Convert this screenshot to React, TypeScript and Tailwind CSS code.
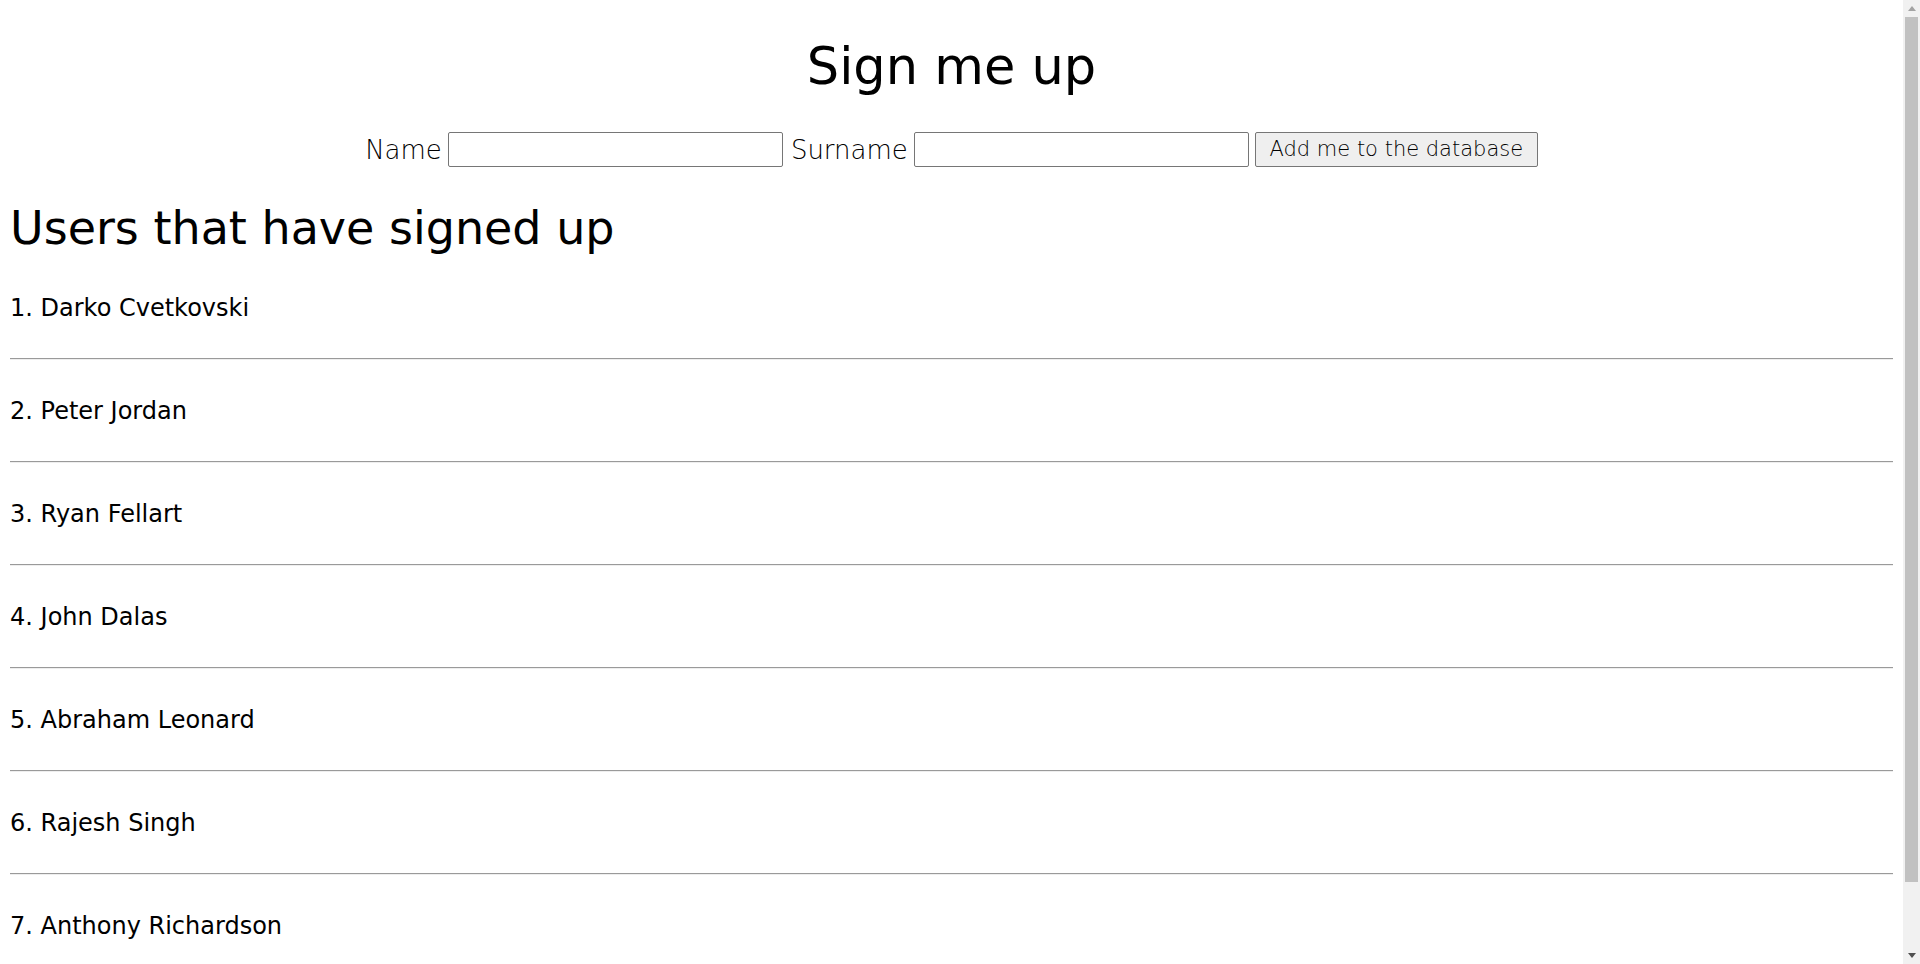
import React from "react";

const users = [
  "Darko Cvetkovski",
  "Peter Jordan",
  "Ryan Fellart",
  "John Dalas",
  "Abraham Leonard",
  "Rajesh Singh",
  "Anthony Richardson",
];

function FakeScrollbar() {
  return (
    <div className="flex h-full w-[17px] shrink-0 flex-col bg-[#f1f1f1]">
      <div className="flex h-[17px] items-center justify-center">
        <svg width="8" height="5" viewBox="0 0 8 5">
          <polygon points="4,0 8,5 0,5" fill="#a3a3a3" />
        </svg>
      </div>
      <div className="flex flex-1 flex-col px-[2px]">
        <div className="h-[865px] bg-[#c1c1c1]" />
      </div>
      <div className="flex h-[17px] items-center justify-center">
        <svg width="8" height="5" viewBox="0 0 8 5">
          <polygon points="0,0 8,0 4,5" fill="#505050" />
        </svg>
      </div>
    </div>
  );
}

export default function App() {
  return (
    <div
      className="flex h-screen w-full overflow-hidden bg-white text-black"
      style={{ fontFamily: '"DejaVu Sans", "Noto Sans", sans-serif' }}
    >
      <div className="min-w-0 flex-1 overflow-hidden px-[10px] pb-[59px]">
        <h1 className="pt-[41px] text-center text-[51px] leading-none font-normal">Sign me up</h1>
        <form
          className="mt-[40px] flex items-center justify-center gap-[6px]"
          onSubmit={(e) => e.preventDefault()}
        >
          <label className="text-[26px] leading-none font-light text-black">Name</label>
          <input
            type="text"
            className="h-[35px] w-[335px] rounded-[2px] border border-[#767676] bg-white px-1"
          />
          <label className="ml-[2px] text-[26px] leading-none font-light text-black">Surname</label>
          <input
            type="text"
            className="h-[35px] w-[335px] rounded-[2px] border border-[#767676] bg-white px-1"
          />
          <button
            type="submit"
            className="h-[35px] w-[283px] rounded-[2px] border border-[#767676] bg-[#efefef] text-[21px] leading-none font-light text-black"
          >
            Add me to the database
          </button>
        </form>
        <h2 className="mt-[38px] text-[46px] leading-none font-normal">Users that have signed up</h2>
        <div className="pt-[6px]">
          {users.map((u, i) => (
            <div key={u}>
              <p className="mt-[39px] mb-[38px] text-[24px] leading-none">
                {i + 1}. {u}
              </p>
              <div className="h-[2px] border-t border-t-[#9a9a9a] border-b border-b-[#eeeeee]" />
            </div>
          ))}
        </div>
      </div>
      <FakeScrollbar />
    </div>
  );
}
